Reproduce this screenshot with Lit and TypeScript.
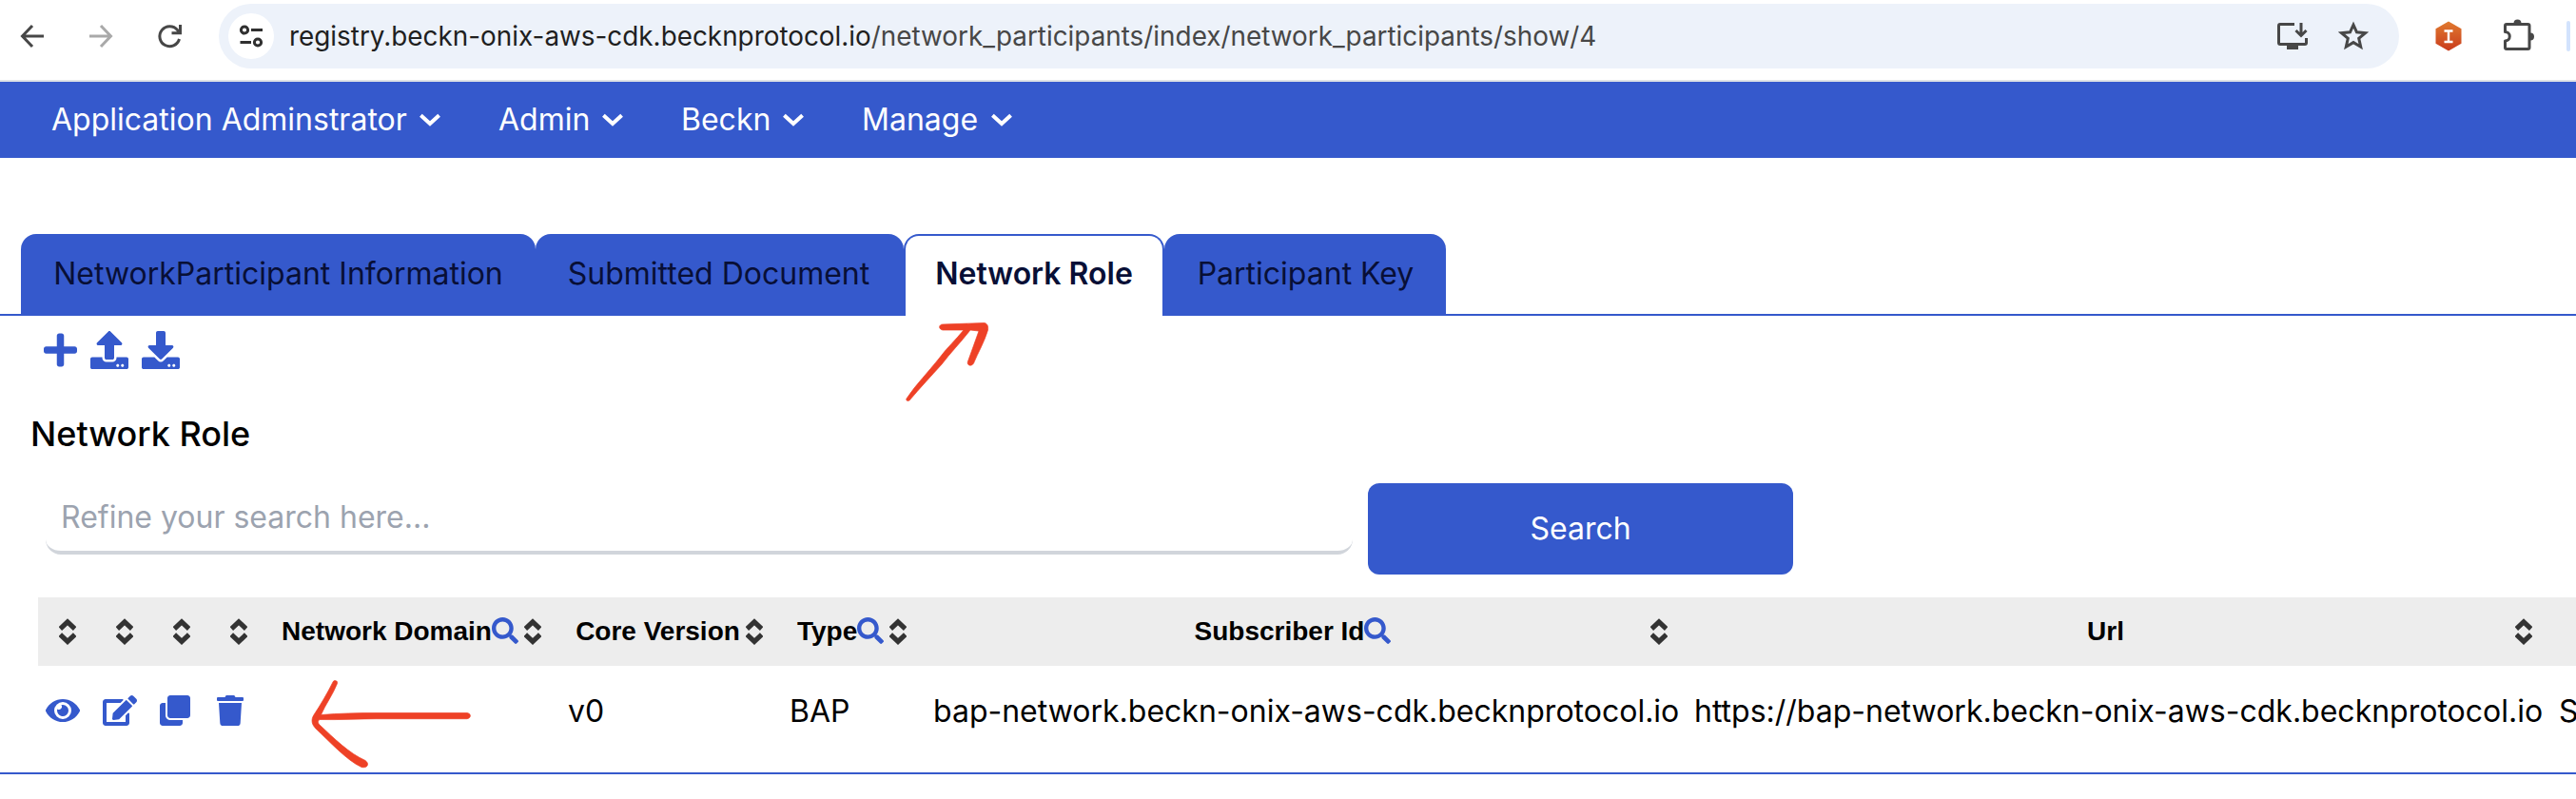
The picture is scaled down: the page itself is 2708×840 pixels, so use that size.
import { LitElement, html, css } from "lit";
import { customElement } from "lit/decorators.js";

const UPLOAD = "M296 384h-80c-13.3 0-24-10.7-24-24V192h-87.7c-17.8 0-26.7-21.5-14.1-34.1L242.3 5.7c7.5-7.5 19.8-7.5 27.3 0l152.2 152.2c12.6 12.6 3.7 34.1-14.1 34.1H320v168c0 13.3-10.7 24-24 24zm216-8v112c0 13.3-10.7 24-24 24H24c-13.3 0-24-10.7-24-24V376c0-13.3 10.7-24 24-24h136v8c0 30.9 25.1 56 56 56h80c30.9 0 56-25.1 56-56v-8h136c13.3 0 24 10.7 24 24zm-124 88c0-11-9-20-20-20s-20 9-20 20 9 20 20 20 20-9 20-20zm64 0c0-11-9-20-20-20s-20 9-20 20 9 20 20 20 20-9 20-20z";
const DOWNLOAD = "M216 0h80c13.3 0 24 10.7 24 24v168h87.7c17.8 0 26.7 21.5 14.1 34.1L269.7 378.3c-7.5 7.5-19.8 7.5-27.3 0L90.1 226.1c-12.6-12.6-3.7-34.1 14.1-34.1H192V24c0-13.3 10.7-24 24-24zm296 376v112c0 13.3-10.7 24-24 24H24c-13.3 0-24-10.7-24-24V376c0-13.3 10.7-24 24-24h146.7l49 49c20.1 20.1 52.5 20.1 72.6 0l49-49H488c13.3 0 24 10.7 24 24zm-124 88c0-11-9-20-20-20s-20 9-20 20 9 20 20 20 20-9 20-20zm64 0c0-11-9-20-20-20s-20 9-20 20 9 20 20 20 20-9 20-20z";
const PLUS = "M416 208H272V64c0-17.67-14.33-32-32-32h-32c-17.67 0-32 14.33-32 32v144H32c-17.67 0-32 14.33-32 32v32c0 17.67 14.33 32 32 32h144v144c0 17.67 14.33 32 32 32h32c17.67 0 32-14.33 32-32V304h144c17.67 0 32-14.33 32-32v-32c0-17.67-14.33-32-32-32z";
const SEARCH = "M505 442.7L405.3 343c-4.5-4.5-10.6-7-17-7H372c27.6-35.3 44-79.7 44-128C416 93.1 322.9 0 208 0S0 93.1 0 208s93.1 208 208 208c48.3 0 92.7-16.4 128-44v16.3c0 6.4 2.5 12.5 7 17l99.7 99.7c9.4 9.4 24.6 9.4 33.9 0l28.3-28.3c9.4-9.4 9.4-24.6.1-34zM208 336c-70.7 0-128-57.2-128-128 0-70.7 57.2-128 128-128 70.7 0 128 57.2 128 128 0 70.7-57.2 128-128 128z";
const EYE = "M572.52 241.4C518.29 135.59 410.93 64 288 64S57.68 135.64 3.48 241.41a32.35 32.35 0 0 0 0 29.19C57.71 376.41 165.07 448 288 448s230.32-71.64 284.52-177.41a32.35 32.35 0 0 0 0-29.19zM288 400a144 144 0 1 1 144-144 143.93 143.93 0 0 1-144 144zm0-240a95.31 95.31 0 0 0-25.31 3.79 47.85 47.85 0 0 1-66.9 66.9A95.78 95.78 0 1 0 288 160z";
const EDIT = "M402.6 83.2l90.2 90.2c3.8 3.8 3.8 10 0 13.8L274.4 405.600l-92.8 10.300c-12.400 1.400-22.900-9.100-21.500-21.500l10.300-92.800L388.800 83.200c3.800-3.800 10-3.800 13.800 0zm162-22.900l-48.800-48.800c-15.200-15.200-39.900-15.200-55.200 0l-35.400 35.400c-3.800 3.800-3.800 10 0 13.800l90.200 90.200c3.800 3.800 10 3.800 13.800 0l35.400-35.400c15.200-15.300 15.200-40 0-55.200zM384 346.200V448H64V128h229.800c3.200 0 6.200-1.300 8.500-3.500l40-40c7.600-7.600 2.200-20.500-8.500-20.500H48C21.500 64 0 85.500 0 112v352c0 26.500 21.500 48 48 48h352c26.500 0 48-21.500 48-48V306.200c0-10.700-12.900-16-20.500-8.500l-40 40c-2.200 2.300-3.500 5.300-3.500 8.500z";
const CLONE = "M464 0c26.510 0 48 21.490 48 48v288c0 26.510-21.490 48-48 48H176c-26.510 0-48-21.490-48-48V48c0-26.510 21.490-48 48-48h288M176 416c-44.112 0-80-35.888-80-80V128H48c-26.510 0-48 21.490-48 48v288c0 26.510 21.490 48 48 48h288c26.510 0 48-21.490 48-48v-48H176z";
const TRASH = "M432 32H312l-9.400-18.700A24 24 0 0 0 281.100 0H166.800a23.720 23.720 0 0 0-21.400 13.300L136 32H16A16 16 0 0 0 0 48v32a16 16 0 0 0 16 16h416a16 16 0 0 0 16-16V48a16 16 0 0 0-16-16zM32 128l21.200 339a48 48 0 0 0 47.900 45h245.800a48 48 0 0 0 47.900-45L416 128z";

const glyph = (d: string, w: number, height: number) => html`<svg
  viewBox="0 0 ${w} 512" width=${(w / 512) * height} height=${height} fill="currentColor"><path d=${d}></path></svg>`;

const sort = html`<svg class="sort" viewBox="0 0 18 28" width="18" height="28" fill="none"
  stroke="#333" stroke-width="5.200"><path d="M1.300 11L9 3.800L16.700 11M1.300 17.200L9 24.400L16.700 17.200"></path></svg>`;

const chevron = html`<svg viewBox="0 0 24 14" width="24" height="14" fill="none" stroke="#fff"
  stroke-width="4"><path d="M2.400 2.200L12 11L21.600 2.200"></path></svg>`;

const MENUS = [
  { label: "Application Adminstrator", cls: "m1" },
  { label: "Admin", cls: "m2" },
  { label: "Beckn", cls: "m3" },
  { label: "Manage", cls: "m4" },
];

const TABS = [
  { label: "NetworkParticipant Information", cls: "t1" },
  { label: "Submitted Document", cls: "t2" },
  { label: "Network Role", cls: "t3 active" },
  { label: "Participant Key", cls: "t4" },
];

const COLUMNS = [
  { label: "", search: false },
  { label: "", search: false },
  { label: "", search: false },
  { label: "", search: false },
  { label: "Network Domain", search: true },
  { label: "Core Version", search: false },
  { label: "Type", search: true },
  { label: "Subscriber Id", search: true },
  { label: "Url", search: false },
];

@customElement("browser-bar")
class BrowserBar extends LitElement {
  static styles = css`
    :host { display: flex; align-items: center; height: 86px; padding-bottom: 8px; box-sizing: border-box;
      border-bottom: 2px solid #dfe3e6; background: #fff; }
    svg { display: block; flex: none; }
    .nav { display: flex; gap: 40px; width: 230px; padding-left: 18px; box-sizing: border-box; }
    .omni { display: flex; align-items: center; width: 2292px; height: 68px; border-radius: 34px;
      background: #edf2fa; box-sizing: border-box; padding: 0 32px 0 10px; }
    .site { width: 48px; height: 48px; border-radius: 50%; background: #fff; display: grid; place-items: center; }
    .url { flex: 1; margin-left: 16px; font: 27.860px/40px Inter, sans-serif; color: #474747; white-space: pre; }
    .host { color: #1f1f1f; }
    .tools { display: flex; gap: 28px; }
    .ext { display: flex; align-items: center; }
    .hex { margin-left: 38px; }
    .puzzle { margin-left: 40px; }
    .bar { width: 4px; height: 32px; border-radius: 2px; background: #d3e3fd; margin-left: 30px; }
  `;
  render() {
    return html`
      <div class="nav">
        <svg viewBox="0 0 32 32" width="32" height="32" fill="none" stroke="#474747" stroke-width="3"><path d="M28 16H6M16 5L5.500 16L16 27"></path></svg>
        <svg viewBox="0 0 32 32" width="32" height="32" fill="none" stroke="#a9a9a9" stroke-width="3"><path d="M4 16H26M16 5L26.500 16L16 27"></path></svg>
        <svg viewBox="0 0 32 32" width="32" height="32" fill="none" stroke="#474747" stroke-width="3"><path d="M26.500 19A10.500 10.500 0 1 1 24.500 9.500L27 12.200M27.500 4V12.800H18.500"></path></svg>
      </div>
      <div class="omni">
        <div class="site">
          <svg viewBox="0 0 26 26" width="26" height="26" fill="none" stroke="#303030" stroke-width="3"><circle cx="6" cy="6.500" r="3.600"></circle><path d="M13 6.500H25M1.500 19.500H13"></path><circle cx="20" cy="19.500" r="3.600"></circle></svg>
        </div>
        <div class="url"><span class="host">registry.beckn-onix-aws-cdk.becknprotocol.io</span>/network_participants/index/network_participants/show/4</div>
        <div class="tools">
          <svg viewBox="0 0 40 32" width="40" height="32" fill="none" stroke="#474747" stroke-width="3"><path d="M22 3.500H7Q5.500 3.500 5.500 5V23Q5.500 24.500 7 24.500H33Q34.500 24.500 34.500 23V18M29 2V15M23.500 10L29 15.500L34.500 10"></path><path fill="#474747" stroke="none" d="M14 25H26V30H14z"></path></svg>
          <svg viewBox="0 0 32 32" width="32" height="32" fill="none" stroke="#474747" stroke-width="3"><path d="M16 4.200L19.500 11.800L28.500 12.700L21.700 18.400L23.700 27.200L16 22.600L8.300 27.200L10.300 18.400L3.500 12.700L12.500 11.800z"></path></svg>
        </div>
      </div>
      <div class="ext">
        <svg class="hex" viewBox="0 0 28 32" width="28" height="32"><defs><linearGradient id="g" x1="0" y1="0" x2="0" y2="1"><stop offset="0" stop-color="#e07a2f"></stop><stop offset="1" stop-color="#c93c1d"></stop></linearGradient></defs><path fill="url(#g)" d="M14 .5L27.500 8.300V23.700L14 31.500L.5 23.700V8.300z"></path><path d="M9.500 10.500H18.500M14 10.500V22M9.500 22H18.500" stroke="#fff" stroke-width="2.400"></path></svg>
        <svg class="puzzle" viewBox="0 0 40 40" width="40" height="40"><path fill="none" stroke="#474747" stroke-width="3" stroke-linejoin="round" d="M7 7.500Q5.500 7.500 5.500 9V15.500A4.500 4.500 0 0 1 5.500 25V32Q5.500 33.500 7 33.500H29.500Q31 33.500 31 32V9Q31 7.500 29.500 7.500z"></path><path fill="#474747" d="M14.500 6.500a4 4 0 0 1 8 0zM32 16.500a4 4 0 0 1 0 8z"></path></svg>
        <div class="bar"></div>
      </div>`;
  }
}

@customElement("app-root")
class AppRoot extends LitElement {
  static styles = css`
    :host { display: block; position: relative; width: 2708px; height: 840px; overflow: hidden; background: #fff;
      font: 32px/48px Inter, sans-serif; color: #000; --blue: #3559cc; }
    svg { display: block; flex: none; }
    .menu { display: flex; height: 80px; background: var(--blue); color: #fff; padding-left: 54px; align-items: center; }
    .item { display: flex; align-items: center; justify-content: space-between; white-space: nowrap; box-sizing: border-box; }
    .m1 { width: 410px; margin-right: 60px; }
    .m2 { width: 132px; margin-right: 60px; }
    .m3 { width: 130px; margin-right: 60px; }
    .m4 { width: 159px; }
    .tabs { display: flex; margin-top: 80px; height: 86px; padding-left: 22px;
      background: linear-gradient(var(--blue), var(--blue)) bottom / 100% 2px no-repeat; }
    .tab { box-sizing: border-box; background: var(--blue); color: #080f36; border-radius: 16px 16px 0 0;
      text-align: center; padding-top: 18px; white-space: nowrap; height: 86px; }
    .t1 { width: 541px; }
    .t2 { width: 387px; padding-right: 2px; }
    .t3 { width: 274px; }
    .t4 { width: 296px; padding-left: 1px; }
    .active { background: #fff; border: 2px solid var(--blue); border-bottom: 0; font-weight: 600; padding-top: 16px; }
    .actions { display: flex; gap: 14px; padding: 16px 0 0 46px; color: var(--blue); }
    h2 { margin: 42px 0 0 32px; font-size: 36px; line-height: 52px; font-weight: 500; }
    .search { display: flex; padding-left: 48px; margin-top: 26px; height: 96px; }
    .field { width: 1374px; height: 75px; box-sizing: border-box; border-bottom: 4px solid #d1d5db; border-radius: 16px;
      color: #9ca3af; padding: 12px 0 0 16px; }
    .btn { margin-left: 16px; width: 447px; height: 96px; border-radius: 12px; background: var(--blue); color: #fff;
      text-align: center; line-height: 96px; }
    .row { display: grid; grid-template-columns: 60px 60px 60px 60px 309px 233px 151px 800px 909px 400px; padding-left: 40px; }
    .head { margin-top: 24px; height: 72px; padding: 0; margin-left: 40px; background: #ededed;
      font: 700 28px/72px "Liberation Sans", Arial, sans-serif; }
    .th { display: flex; align-items: center; padding: 0 20px 0 16px; white-space: nowrap; }
    .label { flex: 1; display: flex; align-items: center; justify-content: center; }
    .label svg { color: var(--blue); margin-top: -3px; }
    .pad { width: 6px; }
    .body { height: 112px; border-bottom: 2px solid var(--blue); }
    .td { padding: 24px 0 0 8px; white-space: nowrap; }
    .icon { color: var(--blue); padding-top: 31px; }
    .marks { position: absolute; left: 0; top: 0; pointer-events: none; }
  `;
  render() {
    return html`
      <browser-bar></browser-bar>
      <nav class="menu">${MENUS.map((m) => html`<div class="item ${m.cls}">${m.label}${chevron}</div>`)}</nav>
      <div class="tabs">${TABS.map((t) => html`<div class="tab ${t.cls}">${t.label}</div>`)}</div>
      <div class="actions">${glyph(PLUS, 448, 40)}${glyph(UPLOAD, 512, 40)}${glyph(DOWNLOAD, 512, 40)}</div>
      <h2>Network Role</h2>
      <div class="search"><div class="field">Refine your search here...</div><div class="btn">Search</div></div>
      <div class="row head">
        ${COLUMNS.map((c) => html`<div class="th"><span class="label">${c.label}${c.search ? glyph(SEARCH, 512, 28) : ""}</span>${c.label ? html`<span class="pad"></span>` : ""}${sort}</div>`)}
      </div>
      <div class="row body">
        <div class="td icon">${glyph(EYE, 576, 32)}</div>
        <div class="td icon">${glyph(EDIT, 576, 32)}</div>
        <div class="td icon">${glyph(CLONE, 512, 32)}</div>
        <div class="td icon">${glyph(TRASH, 448, 32)}</div>
        <div class="td"></div>
        <div class="td">v0</div>
        <div class="td">BAP</div>
        <div class="td">bap-network.beckn-onix-aws-cdk.becknprotocol.io</div>
        <div class="td">https://bap-network.beckn-onix-aws-cdk.becknprotocol.io</div>
        <div class="td">S</div>
      </div>
      <svg class="marks" viewBox="0 0 2708 840" width="2708" height="840" fill="#ee4126" stroke="#ee4126" stroke-width=".7">
        <path d="M953 419C963 404 976 391 987 377C995 366 1005 357 1013 347L991 347C986 346 987 341 991 341L1034 339.500C1038 339.500 1039 343 1038.500 347C1035 359 1028 371 1023.500 382C1021 386 1016 384 1017.500 380L1029 348L1020 347C1010 360 999 371 990 383C979 395 967 408 956 421C954 422 952 421 953 419z"></path>
        <path d="M350 717C351 714.500 355.500 715.500 354.500 718.500C350 730 342 741 337.500 751.500C356 750 376 749.500 396 749.500H491C495.500 750 495.500 755 491 755.700H396C376 755.700 356 757 336 756.500C333.500 758 334 760.500 337 763C351 776 367 792 384 799.500C389 803 386 808 380 806.500C364 799 347 780 332 766C328 762 326.500 757 330 751.500C337 741 344 729 350 717z"></path>
      </svg>`;
  }
}
